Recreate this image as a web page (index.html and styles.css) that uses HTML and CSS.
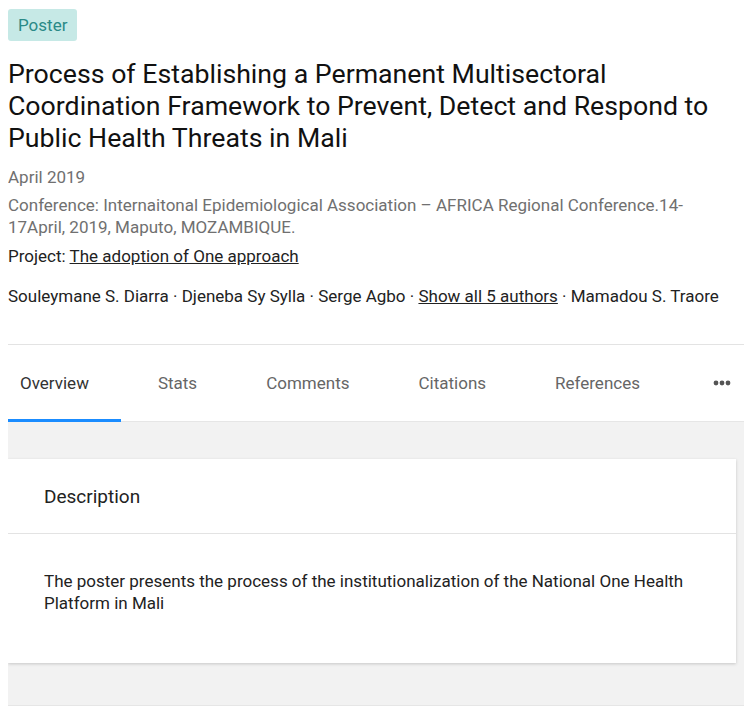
FILE: index.html
```html
<!DOCTYPE html>
<html lang="en">
<head>
  <meta charset="UTF-8" />
  <meta name="viewport" content="width=device-width, initial-scale=1.0"/>
  <title>Process of Establishing a Permanent Multisectoral Coordination Framework</title>
  <link rel="stylesheet" href="styles.css">
</head>
<body>
  <div class="header">
    <span class="badge">Poster</span>
    <h1 class="title">Process of Establishing a Permanent Multisectoral Coordination Framework to Prevent, Detect and Respond to Public Health Threats in Mali</h1>

    <div class="meta date">April 2019</div>
    <div class="meta conference">Conference: Internaitonal Epidemiological Association – AFRICA Regional Conference.14-17April, 2019, Maputo, MOZAMBIQUE.</div>
    <div class="meta project">Project: <a href="#">The adoption of One approach</a></div>

    <div class="authors">
      Souleymane S. Diarra · Djeneba Sy Sylla · Serge Agbo · <a href="#">Show all 5 authors</a> · Mamadou S. Traore
    </div>
  </div>

  <nav class="tabs">
    <a href="#" class="tab active">Overview</a>
    <a href="#" class="tab">Stats</a>
    <a href="#" class="tab">Comments</a>
    <a href="#" class="tab">Citations</a>
    <a href="#" class="tab">References</a>
    <span class="more">
      <svg width="18" height="6" viewBox="0 0 18 6">
        <circle cx="3" cy="3" r="2.4" fill="#555"/>
        <circle cx="9" cy="3" r="2.4" fill="#555"/>
        <circle cx="15" cy="3" r="2.4" fill="#555"/>
      </svg>
    </span>
  </nav>

  <div class="content">
    <div class="card">
      <div class="card-header">Description</div>
      <div class="card-body">
        The poster presents the process of the institutionalization of the National One Health Platform in Mali
      </div>
    </div>
  </div>
</body>
</html>
```

FILE: styles.css
```css
body {
  margin: 9px 0 0 8px;
  font-family: Roboto, "Noto Sans", Arial, sans-serif;
  background: white;
  color: #222;
  overflow: hidden;
}

a {
  color: inherit;
}

.badge {
  display: inline-block;
  background: #c6e9e6;
  color: #2a8a87;
  font-size: 17px;
  line-height: 24px;
  padding: 4px 10px;
  border-radius: 3px;
}

.title {
  margin: 17px 0 12px;
  font-size: 26.7px;
  line-height: 32px;
  font-weight: 400;
  color: #111;
  max-width: 730px;
}

.meta {
  font-size: 17px;
  line-height: 22px;
  color: #707070;
}

.conference {
  margin-top: 6px;
  max-width: 690px;
}

.project {
  margin-top: 7px;
  color: #222;
}

.authors {
  margin-top: 18px;
  font-size: 17px;
  line-height: 22px;
  color: #222;
}

.tabs {
  margin-top: 37px;
  border-top: 1px solid #e3e3e3;
  display: flex;
  align-items: stretch;
  gap: 25px;
  height: 76px;
  width: 800px;
}

.tab {
  display: flex;
  align-items: center;
  padding: 1px 32px 0 12px;
  font-size: 17px;
  color: #666;
  text-decoration: none;
  border-bottom: 3px solid transparent;
  margin-bottom: -1px;
}

.tab.active {
  color: #333;
  border-bottom-color: #1a8cff;
}

.more {
  display: flex;
  align-items: center;
  padding-left: 16px;
}

.content {
  background: #f2f2f2;
  border-top: 1px solid #e6e6e6;
  border-bottom: 1px solid #e6e6e6;
  padding: 37px 0 42px;
  width: 800px;
}

.card {
  width: 728px;
  background: white;
  box-shadow: 0 1px 3px rgba(0, 0, 0, 0.18);
}

.card-header {
  padding: 0 36px;
  height: 74px;
  display: flex;
  align-items: center;
  font-size: 19px;
  color: #222;
  border-bottom: 1px solid #e3e3e3;
}

.card-body {
  padding: 36px 36px 49px;
  font-size: 17px;
  line-height: 22px;
  color: #222;
}
```
